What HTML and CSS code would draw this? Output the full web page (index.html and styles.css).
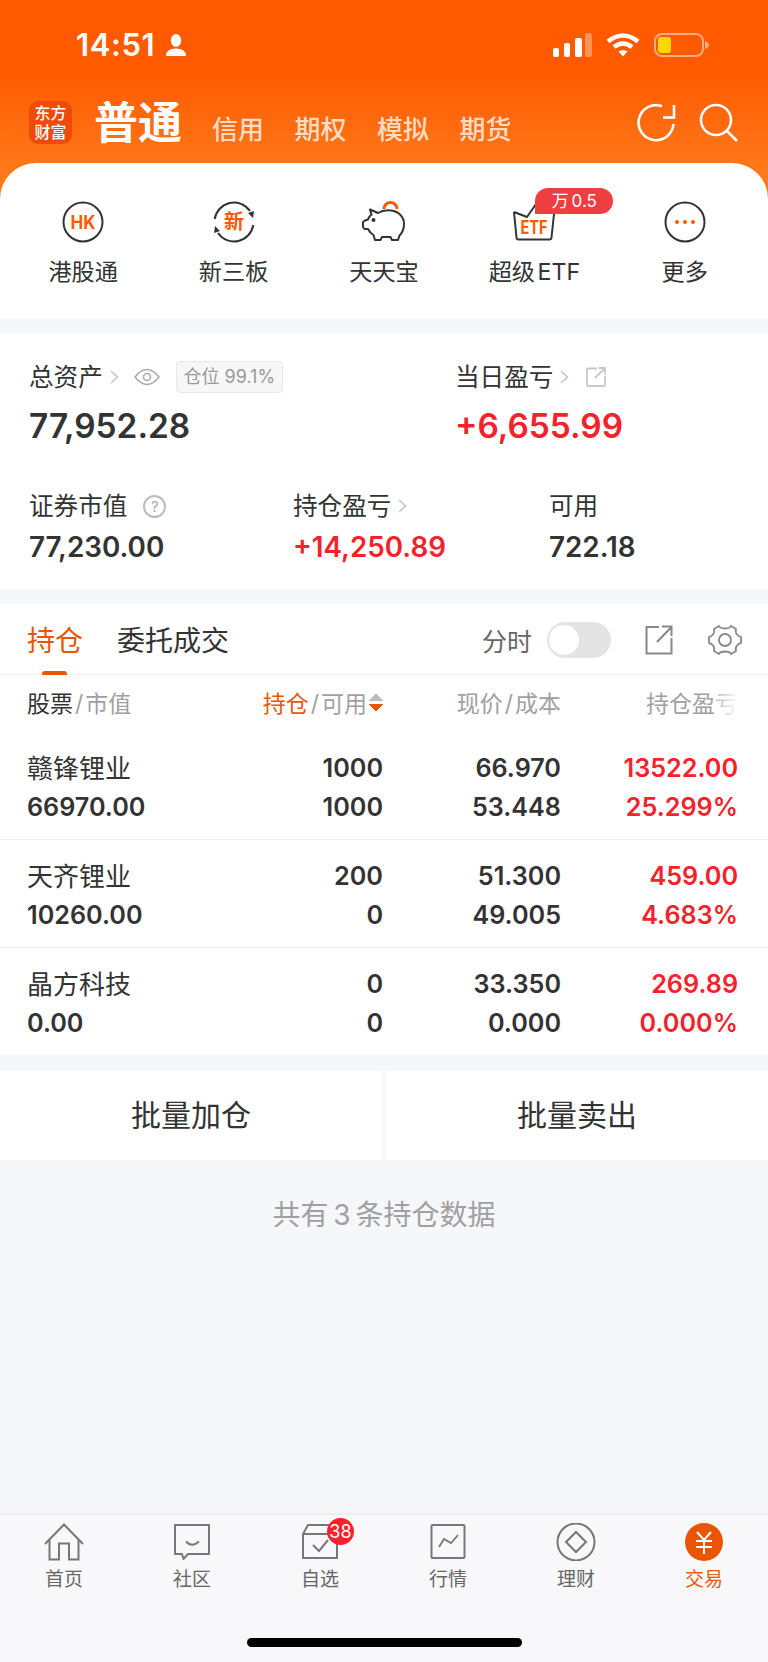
FILE: index.html
```html
<!DOCTYPE html>
<html>
<head>
    <meta charset="utf-8">
    <title>交易</title>
    <link rel="stylesheet" href="styles.css">
</head>
<body>
    <div id="app">
        <div class="hero">
            <div class="statusbar">
                <div class="clock">
                    <span class="time">14:51</span>
                    <svg class="person" width="20" height="22" viewBox="0 0 20 22"><ellipse cx="10" cy="6.5" rx="5.2" ry="6.5" fill="#fff"/><path d="M0 22 Q0 14.5 10 14.5 Q20 14.5 20 22 Z" fill="#fff"/></svg>
                </div>
                <svg class="sysicons" width="158" height="24" viewBox="0 0 158 24">
                    <rect x="0" y="15" width="6" height="9" rx="2" fill="#fff"/>
                    <rect x="11" y="10" width="6" height="14" rx="2" fill="#fff"/>
                    <rect x="22" y="5" width="7" height="19" rx="2" fill="#fff"/>
                    <rect x="32" y="0" width="7" height="24" rx="2" fill="#fff" fill-opacity=".35"/>
                    <path d="M55 8.5 Q70 -3.5 85 8.5" fill="none" stroke="#fff" stroke-width="4.6"/>
                    <path d="M61 14 Q70 7 79 14" fill="none" stroke="#fff" stroke-width="4.6"/>
                    <path d="M65.5 18.5 Q70 15.5 74.5 18.5 L70 23.5 Z" fill="#fff"/>
                    <rect x="102" y="1" width="48" height="22" rx="7" fill="none" stroke="#fff" stroke-opacity=".5" stroke-width="2"/>
                    <rect x="105" y="4" width="13" height="16" rx="3" fill="#ffd60a"/>
                    <path d="M152 8 Q156 9.5 156 12 Q156 14.5 152 16 Z" fill="#fff" fill-opacity=".5"/>
                </svg>
            </div>
            <div class="titlebar">
                <div class="logo"><span>东方</span><span>财富</span></div>
                <div class="acct-active">普通</div>
                <ul class="acct-tabs">
                    <li>信用</li>
                    <li>期权</li>
                    <li>模拟</li>
                    <li>期货</li>
                </ul>
                <div class="title-icons">
                    <svg width="40" height="40" viewBox="0 0 40 40" fill="none" stroke="#fff" stroke-width="2.6"><path d="M26 3.2 A17.5 17.5 0 1 0 37.5 21"/><path d="M27 14.5 H38 V2"/></svg>
                    <svg width="40" height="40" viewBox="0 0 40 40" fill="none" stroke="#fff" stroke-width="2.6"><circle cx="17" cy="17" r="15"/><path d="M28 28 L38 38"/></svg>
                </div>
            </div>
            <div class="quick">
                <div class="quick-item">
                    <div class="quick-icon">
                        <svg width="44" height="44" viewBox="0 0 44 44"><circle cx="22" cy="22" r="19.5" fill="none" stroke="#333" stroke-width="2"/><text x="22" y="29" text-anchor="middle" class="ic-text" font-size="19" textLength="25" lengthAdjust="spacingAndGlyphs">HK</text></svg>
                    </div>
                    <div class="quick-label">港股通</div>
                </div>
                <div class="quick-item">
                    <div class="quick-icon">
                        <svg width="44" height="44" viewBox="0 0 44 44"><path d="M2.700 19 A19.500 19.500 0 0 1 38 11 M41.300 25 A19.500 19.500 0 0 1 6 33" fill="none" stroke="#333" stroke-width="2"/><path d="M36 13 L42 11 L41 18 Z M8 31 L2 33 L3 26 Z" fill="#333"/><text x="22" y="29" text-anchor="middle" class="ic-text" font-size="20">新</text></svg>
                    </div>
                    <div class="quick-label">新三板</div>
                </div>
                <div class="quick-item">
                    <div class="quick-icon">
                        <svg width="44" height="44" viewBox="0 0 44 44"><path d="M22 9 a6.500 6.500 0 0 1 13 0" fill="none" stroke="#ff5a00" stroke-width="3"/><path d="M8 9.500 L16 13 C20 10.500 25 10 29 10.500 C37 11.500 42 17 42 24 C42 29 40 33 37.500 35.500 L36 40 H30 L28.500 37 H20 L18.500 40 H13 L11.500 35 C9 33.500 7 31 6 29 H2.500 L1 27 V22 L3 20.500 L6 19.500 C6.500 17 8 16 9.500 14.500 Z" fill="#fff" stroke="#333" stroke-width="2" stroke-linejoin="round"/><circle cx="11.500" cy="20" r="2" fill="#333"/></svg>
                    </div>
                    <div class="quick-label">天天宝</div>
                </div>
                <div class="quick-item">
                    <div class="quick-icon">
                        <svg width="44" height="44" viewBox="0 0 44 44"><path d="M2 12 L4.500 37.500 Q4.700 39.500 6.500 39.500 H37.500 Q39.300 39.500 39.500 37.500 L42 14 M2 12 L15 17 L24 4" fill="none" stroke="#333" stroke-width="2" stroke-linejoin="round"/><text x="22" y="34" text-anchor="middle" class="ic-text" font-size="19" textLength="27" lengthAdjust="spacingAndGlyphs">ETF</text></svg>
                        <span class="quick-badge">万 0.5</span>
                    </div>
                    <div class="quick-label">超级 ETF</div>
                </div>
                <div class="quick-item">
                    <div class="quick-icon">
                        <svg width="44" height="44" viewBox="0 0 44 44"><circle cx="22" cy="22" r="19.500" fill="none" stroke="#333" stroke-width="2"/><circle cx="14" cy="22" r="2" fill="#ff5a00"/><circle cx="22" cy="22" r="2" fill="#ff5a00"/><circle cx="30" cy="22" r="2" fill="#ff5a00"/></svg>
                    </div>
                    <div class="quick-label">更多</div>
                </div>
            </div>
        </div>

        <div class="assets">
            <div class="asset-row">
                <div class="asset-col wide">
                    <div class="asset-label">总资产
                        <svg class="chev" width="9" height="14" viewBox="0 0 9 14"><path d="M1 1 L7.500 7 L1 13" fill="none" stroke="#c4c4c4" stroke-width="1.500"/></svg>
                        <svg class="eye" width="26" height="18" viewBox="0 0 26 18" fill="none" stroke="#aaa" stroke-width="1.600"><path d="M1 9 Q13 -6 25 9 Q13 24 1 9 Z"/><circle cx="13" cy="9" r="3.500"/></svg>
                        <span class="tag">仓位 99.1%</span>
                    </div>
                    <div class="asset-value big">77,952.28</div>
                </div>
                <div class="asset-col">
                    <div class="asset-label">当日盈亏
                        <svg class="chev" width="9" height="14" viewBox="0 0 9 14"><path d="M1 1 L7.500 7 L1 13" fill="none" stroke="#c4c4c4" stroke-width="1.500"/></svg>
                        <svg class="share" width="20" height="20" viewBox="0 0 20 20" fill="none" stroke="#c8c8c8" stroke-width="1.800"><path d="M11 1.500 H2 Q1 1.500 1 2.500 V18 Q1 19 2 19 H18 Q19 19 19 18 V9"/><path d="M9 11 L18.500 1.500 M12.500 1 H19 V7.500"/></svg>
                    </div>
                    <div class="asset-value big up">+6,655.99</div>
                </div>
            </div>
            <div class="asset-row second">
                <div class="asset-col c1">
                    <div class="asset-label">证券市值
                        <span class="help">?</span>
                    </div>
                    <div class="asset-value">77,230.00</div>
                </div>
                <div class="asset-col c2">
                    <div class="asset-label">持仓盈亏
                        <svg class="chev" width="9" height="14" viewBox="0 0 9 14"><path d="M1 1 L7.500 7 L1 13" fill="none" stroke="#c4c4c4" stroke-width="1.500"/></svg>
                    </div>
                    <div class="asset-value up">+14,250.89</div>
                </div>
                <div class="asset-col">
                    <div class="asset-label">可用</div>
                    <div class="asset-value">722.18</div>
                </div>
            </div>
        </div>

        <div class="holdings">
            <div class="tabs">
                <div class="tab active">持仓</div>
                <div class="tab">委托成交</div>
                <div class="tab-tools">
                    <span class="fenshi">分时</span>
                    <span class="toggle"><i></i></span>
                    <svg class="tool-share" width="28" height="30" viewBox="0 0 28 30" fill="none" stroke="#888" stroke-width="2"><path d="M14 2 H1.500 V28.500 H26.500 V13"/><path d="M12 17 L26 2.500 M17 1.500 H26.500 V11"/></svg>
                    <svg class="tool-gear" width="34" height="32" viewBox="0 0 34 32" fill="none" stroke="#888" stroke-width="1.800"><path d="M11 2 Q12 4.500 17 4.500 Q22 4.500 23 2 L28 5 Q27 8 29 10.500 Q30.500 12.500 33 13 V19 Q30.500 19.500 29 21.500 Q27 24 28 27 L23 30 Q22 27.500 17 27.500 Q12 27.500 11 30 L6 27 Q7 24 5 21.500 Q3.500 19.500 1 19 V13 Q3.500 12.500 5 10.500 Q7 8 6 5 Z" stroke-linejoin="round"/><circle cx="17" cy="16" r="6"/></svg>
                </div>
            </div>
            <div class="grid head">
                <div class="left"><span class="dark">股票</span><span class="slash">/</span>市值</div>
                <div class="sortcell"><span class="orange">持仓</span><span class="slash">/</span>可用<span class="sort"></span></div>
                <div>现价<span class="slash">/</span>成本</div>
                <div>持仓盈<span class="fade">亏</span></div>
            </div>
            <div class="grid row">
                <div class="left name">赣锋锂业</div><div>1000</div><div>66.970</div><div class="up">13522.00</div>
                <div class="left">66970.00</div><div>1000</div><div>53.448</div><div class="up">25.299%</div>
            </div>
            <div class="grid row">
                <div class="left name">天齐锂业</div><div>200</div><div>51.300</div><div class="up">459.00</div>
                <div class="left">10260.00</div><div>0</div><div>49.005</div><div class="up">4.683%</div>
            </div>
            <div class="grid row last">
                <div class="left name">晶方科技</div><div>0</div><div>33.350</div><div class="up">269.89</div>
                <div class="left">0.00</div><div>0</div><div>0.000</div><div class="up">0.000%</div>
            </div>
        </div>

        <div class="batch">
            <div class="batch-btn">批量加仓</div>
            <div class="batch-btn">批量卖出</div>
        </div>
        <div class="count">共有 3 条持仓数据</div>

        <div class="tabbar">
            <div class="nav">
                <svg width="40" height="38" viewBox="0 0 40 38" fill="none" stroke="#777" stroke-width="2"><path d="M1 21 L20 1.500 L39 21"/><path d="M5.500 17 V36.500 H15 V20.500 H25 V36.500 H34.500 V17"/></svg>
                <span>首页</span>
            </div>
            <div class="nav">
                <svg width="40" height="38" viewBox="0 0 40 38" fill="none" stroke="#777" stroke-width="2"><path d="M3 2 H37 V31 H16 L11.500 36 L10 31 H3 Z" stroke-linejoin="round"/><path d="M14 18.500 Q20 25 27 18.500"/></svg>
                <span>社区</span>
            </div>
            <div class="nav">
                <svg width="40" height="38" viewBox="0 0 40 38" fill="none" stroke="#777" stroke-width="2"><path d="M3 11 L8 2 H33 L37 11 V35 H3 Z" stroke-linejoin="round"/><path d="M3 11 H37"/><path d="M13 22 L19 28 L28 17"/></svg>
                <span>自选</span>
                <b class="nav-badge">38</b>
            </div>
            <div class="nav">
                <svg width="40" height="38" viewBox="0 0 40 38" fill="none" stroke="#777" stroke-width="2"><rect x="3.500" y="2" width="33" height="33" rx="1"/><path d="M11 24 L16 16 L23 20 L30 12" stroke-width="1.800"/></svg>
                <span>行情</span>
            </div>
            <div class="nav">
                <svg width="40" height="38" viewBox="0 0 40 38" fill="none" stroke="#777" stroke-width="2"><circle cx="20" cy="19" r="18.500"/><path d="M20 9 L30 19 L20 29 L10 19 Z"/></svg>
                <span>理财</span>
            </div>
            <div class="nav on">
                <svg width="40" height="38" viewBox="0 0 40 38"><circle cx="20" cy="19" r="19" fill="#ea5504"/><path d="M13 9 L20 17 L27 9 M12 18 H28 M12 24 H28 M20 17 V31" fill="none" stroke="#fff" stroke-width="2"/></svg>
                <span>交易</span>
            </div>
            <div class="homebar"></div>
        </div>
    </div>
</body>
</html>
```

FILE: styles.css
```css
html, body {
    height: 100%;
    margin: 0;
    padding: 0;
    background-color: #f6f7f9;
}

body {
    overflow: hidden;
    font-family: Inter, "Noto Sans CJK SC", sans-serif;
    color: #333;
}

ul {
    list-style: none;
    margin: 0;
    padding: 0;
}

#app {
    height: 1662px;
    display: flex;
    flex-direction: column;
}

.up {
    color: #f4232b;
}

/* top orange area */
.hero {
    background: linear-gradient(#ff5a00 0, #ff5a00 70px, #ff7a1c 175px, #ff7a1c 100%);
    flex: none;
}

.statusbar {
    height: 92px;
    box-sizing: border-box;
    padding: 33px 0 0 76px;
    display: flex;
    justify-content: space-between;
    color: #fff;
}

.clock {
    display: flex;
    align-items: center;
    height: 24px;
}

.time {
    font-size: 31px;
    font-weight: 600;
    line-height: 24px;
    letter-spacing: 0.6px;
}

.person {
    margin-left: 11px;
}

.sysicons {
    margin-right: 57px;
}

.titlebar {
    height: 71px;
    box-sizing: border-box;
    padding: 9px 29px 0 29px;
    display: flex;
    align-items: flex-start;
    color: #fff;
}

.logo {
    width: 43px;
    height: 43px;
    border-radius: 9px;
    background: #f04a08;
    display: flex;
    flex-direction: column;
    align-items: center;
    justify-content: center;
    font-size: 16px;
    line-height: 19px;
    font-weight: 500;
}

.acct-active {
    margin-left: 22px;
    font-size: 44px;
    line-height: 44px;
    font-weight: 700;
}

.acct-tabs {
    display: flex;
    gap: 30.5px;
    margin: 11px 0 0 30px;
    font-size: 26px;
    line-height: 36px;
    font-weight: 500;
    color: #ffdcc6;
}

.title-icons {
    margin-left: auto;
    margin-top: 2px;
    display: flex;
    gap: 23px;
}

.quick {
    height: 156px;
    box-sizing: border-box;
    padding: 37px 8px 0;
    background: #fff;
    border-radius: 36px 36px 0 0;
    display: grid;
    grid-template-columns: repeat(5, 1fr);
}

.quick-item {
    display: flex;
    flex-direction: column;
    align-items: center;
}

.quick-icon {
    position: relative;
    width: 44px;
    height: 44px;
}

.ic-text {
    fill: #ff5a00;
    font-weight: 700;
    font-family: Inter, "Noto Sans CJK SC", sans-serif;
}

.quick-badge {
    position: absolute;
    left: 23px;
    top: -12px;
    width: 78px;
    height: 26px;
    border-radius: 13px 13px 13px 0;
    background: #ef3e42;
    color: #fff;
    font-size: 17px;
    line-height: 26px;
    text-align: center;
    white-space: nowrap;
    word-spacing: -2px;
}

.quick-label {
    margin-top: 13px;
    font-size: 23.2px;
    line-height: 30px;
    white-space: nowrap;
    word-spacing: -4px;
}

/* asset summary */
.assets {
    flex: none;
    height: 256px;
    box-sizing: border-box;
    margin-top: 14px;
    padding: 29px 0 0 29px;
    background: #fff;
}

.asset-row {
    display: flex;
}

.asset-row.second {
    margin-top: 43px;
}

.asset-col.wide {
    width: 426px;
}

.asset-col.c1 {
    width: 264px;
}

.asset-col.c2 {
    width: 256px;
}

.asset-label {
    display: flex;
    align-items: center;
    height: 30px;
    font-size: 24.6px;
    line-height: 30px;
    color: #333;
}

.chev {
    margin-left: 7px;
}

.eye {
    margin-left: 15px;
}

.share {
    margin-left: 17px;
}

.tag {
    margin-left: 16px;
    width: 107px;
    height: 32px;
    box-sizing: border-box;
    border: 1px solid #e8e8ea;
    border-radius: 4px;
    background: #f7f7f9;
    color: #999;
    font-size: 18px;
    line-height: 30px;
    text-align: center;
    white-space: nowrap;
}

.help {
    margin-left: 16px;
    width: 23px;
    height: 23px;
    box-sizing: border-box;
    border: 2px solid #bbb;
    border-radius: 50%;
    color: #aaa;
    font-size: 15px;
    line-height: 19px;
    text-align: center;
}

.asset-value {
    margin-top: 7px;
    font-size: 27.8px;
    line-height: 38px;
    font-weight: 600;
}

.asset-value.big {
    margin-top: 12px;
    font-size: 33.4px;
    line-height: 44px;
}

/* holdings table */
.holdings {
    flex: none;
    margin-top: 15px;
    background: #fff;
}

.tabs {
    height: 71px;
    box-sizing: border-box;
    padding: 16px 26px 0 27px;
    display: flex;
    border-bottom: 1px solid #f2f2f4;
}

.tab {
    position: relative;
    font-size: 28px;
    line-height: 42px;
    margin-right: 34px;
}

.tab.active {
    color: #ea5504;
}

.tab.active::after {
    content: "";
    position: absolute;
    left: 15px;
    top: 51px;
    width: 25px;
    height: 4px;
    border-radius: 3px 3px 0 0;
    background: #ea5504;
}

.tab-tools {
    margin-left: auto;
    display: flex;
    align-items: center;
    height: 42px;
    margin-top: -1px;
}

.fenshi {
    font-size: 25px;
    color: #666;
}

.toggle {
    margin-left: 15px;
    width: 64px;
    height: 36px;
    border-radius: 18px;
    background: #e4e4e6;
    display: flex;
    align-items: center;
    padding-left: 2px;
    box-sizing: border-box;
}

.toggle i {
    display: block;
    width: 30px;
    height: 30px;
    border-radius: 50%;
    background: #fff;
}

.tool-share {
    margin-left: 34px;
}

.tool-gear {
    margin-left: 35px;
}

.grid {
    display: grid;
    grid-template-columns: 141px 215px 178px 177px;
    padding: 0 29px 0 27px;
    text-align: right;
}

.grid .left {
    text-align: left;
}

.head {
    height: 58px;
    box-sizing: border-box;
    padding-bottom: 5px;
    align-items: center;
    font-size: 23px;
    color: #a0a0a4;
    white-space: nowrap;
}

.dark {
    color: #333;
}

.orange {
    color: #ea5504;
}

.slash {
    margin: 0 2px;
}

.sortcell {
    position: relative;
    padding-right: 16px;
}

.sort {
    position: absolute;
    right: 0;
    top: 50%;
    margin-top: -9px;
    width: 14px;
    height: 19px;
    background:
        linear-gradient(to bottom right, transparent 50%, #bbb 50%) 0 0 / 7px 8px no-repeat,
        linear-gradient(to bottom left, transparent 50%, #bbb 50%) 7px 0 / 7px 8px no-repeat,
        linear-gradient(to top right, transparent 50%, #ea5504 50%) 0 11px / 7px 8px no-repeat,
        linear-gradient(to top left, transparent 50%, #ea5504 50%) 7px 11px / 7px 8px no-repeat;
}

.fade {
    display: inline-block;
    -webkit-mask-image: linear-gradient(to right, rgba(0, 0, 0, .7), rgba(0, 0, 0, .05));
    mask-image: linear-gradient(to right, rgba(0, 0, 0, .7), rgba(0, 0, 0, .05));
}

.row {
    height: 107.3px;
    box-sizing: border-box;
    padding-bottom: 12px;
    grid-auto-rows: 39px;
    align-content: end;
    font-size: 25.2px;
    font-weight: 600;
    line-height: 39px;
    white-space: nowrap;
    border-bottom: 1px solid #f2f2f4;
}

.row.last {
    border-bottom: 0;
}

.row .name {
    font-weight: 400;
    font-size: 26px;
}

/* batch buttons */
.batch {
    flex: none;
    margin-top: 16px;
    height: 89px;
    display: flex;
    gap: 4px;
}

.batch-btn {
    flex: 1;
    background: #fff;
    font-size: 30px;
    line-height: 89px;
    text-align: center;
}

.count {
    flex: 1;
    padding-top: 35px;
    font-size: 28px;
    line-height: 40px;
    text-align: center;
    color: #a0a0a4;
    word-spacing: -3px;
}

/* bottom nav */
.tabbar {
    position: relative;
    flex: none;
    height: 149px;
    box-sizing: border-box;
    border-top: 2px solid #eeeef0;
    padding-top: 8px;
    background: #f8f8fa;
    display: grid;
    grid-template-columns: repeat(6, 1fr);
    align-items: start;
}

.nav {
    position: relative;
    display: flex;
    flex-direction: column;
    align-items: center;
    font-size: 19px;
    color: #666;
}

.nav span {
    margin-top: 5px;
    line-height: 28px;
}

.nav.on span {
    color: #f05a0e;
}

.nav-badge {
    position: absolute;
    left: 71px;
    top: -5px;
    width: 27px;
    height: 27px;
    border-radius: 50%;
    background: #f4232b;
    color: #fff;
    font-size: 18px;
    font-weight: 400;
    line-height: 27px;
    text-align: center;
}

.homebar {
    position: absolute;
    left: 247px;
    bottom: 15px;
    width: 275px;
    height: 9px;
    border-radius: 5px;
    background: #000;
}
```
